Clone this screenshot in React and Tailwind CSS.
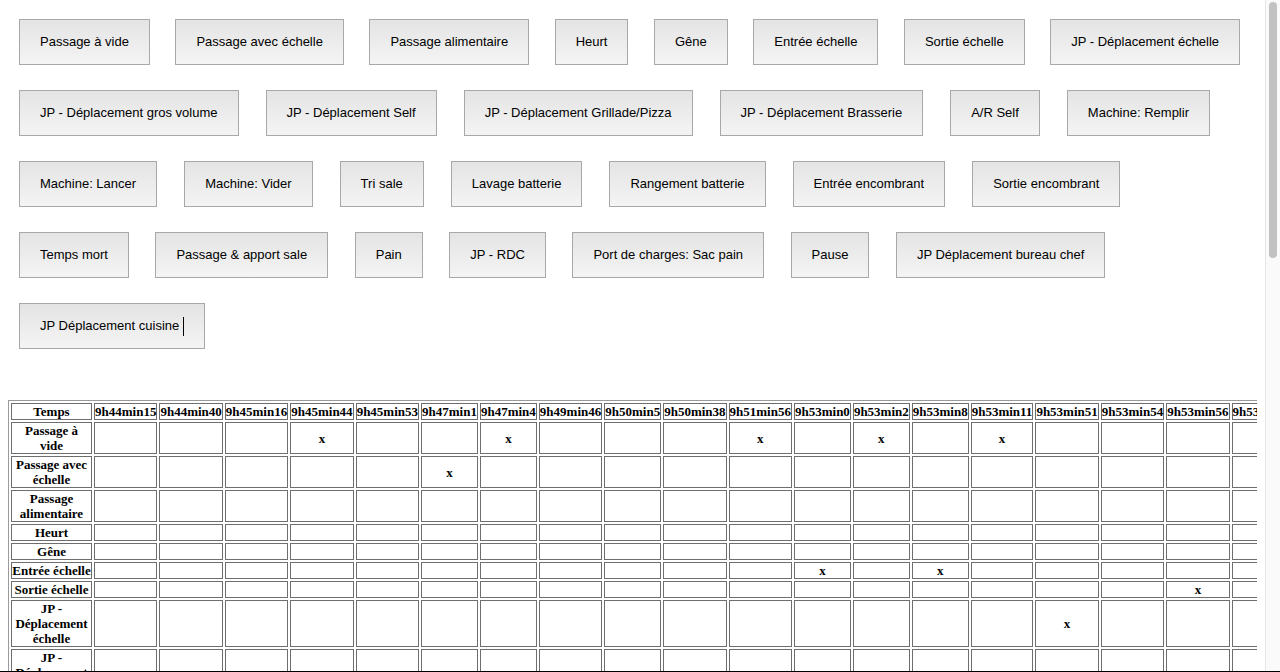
import React from "react";

const buttonRows = [
  {
    gap: "gap-[25.5px]",
    items: [
      "Passage à vide",
      "Passage avec échelle",
      "Passage alimentaire",
      "Heurt",
      "Gêne",
      "Entrée échelle",
      "Sortie échelle",
      "JP - Déplacement échelle",
    ],
  },
  {
    gap: "gap-[27px]",
    items: [
      "JP - Déplacement gros volume",
      "JP - Déplacement Self",
      "JP - Déplacement Grillade/Pizza",
      "JP - Déplacement Brasserie",
      "A/R Self",
      "Machine: Remplir",
    ],
  },
  {
    gap: "gap-[27px]",
    items: [
      "Machine: Lancer",
      "Machine: Vider",
      "Tri sale",
      "Lavage batterie",
      "Rangement batterie",
      "Entrée encombrant",
      "Sortie encombrant",
    ],
  },
  {
    gap: "gap-[26.5px]",
    items: [
      "Temps mort",
      "Passage & apport sale",
      "Pain",
      "JP - RDC",
      "Port de charges: Sac pain",
      "Pause",
      "JP Déplacement bureau chef",
    ],
  },
];

const times = [
  "9h44min15",
  "9h44min40",
  "9h45min16",
  "9h45min44",
  "9h45min53",
  "9h47min1",
  "9h47min4",
  "9h49min46",
  "9h50min5",
  "9h50min38",
  "9h51min56",
  "9h53min0",
  "9h53min2",
  "9h53min8",
  "9h53min11",
  "9h53min51",
  "9h53min54",
  "9h53min56",
  "9h53min59",
  "9h54min12",
  "9h54min30",
];

const actions = [
  "Passage à vide",
  "Passage avec échelle",
  "Passage alimentaire",
  "Heurt",
  "Gêne",
  "Entrée échelle",
  "Sortie échelle",
  "JP - Déplacement échelle",
  "JP - Déplacement gros volume",
  "JP - Déplacement Self",
];

// row index -> columns with a mark
const marks = {
  0: [3, 6, 10, 12, 14],
  1: [5],
  5: [11, 13],
  6: [17],
  7: [15],
};

function ActionButton({ label, children }) {
  return (
    <button className="shrink-0 h-[46px] px-5 border border-[#a8a8a8] bg-linear-to-b from-[#e4e4e4] to-[#f4f4f4] text-[13px] leading-4 text-black whitespace-nowrap">
      {label}
      {children}
    </button>
  );
}

export default function App() {
  return (
    <div className="relative flex h-screen w-full overflow-hidden bg-white font-['Liberation_Sans',Arial,sans-serif]">
      <div className="w-[1265px] shrink-0 overflow-hidden">
        {/* BUTTONS */}
        <div className="flex flex-col gap-[25px] pt-[19px] pl-[19px]">
          {buttonRows.map((row, i) => (
            <div key={i} className={`flex ${row.gap}`}>
              {row.items.map((label) => (
                <ActionButton key={label} label={label} />
              ))}
            </div>
          ))}
          <div className="flex">
            <ActionButton label="JP Déplacement cuisine">
              <span className="inline-block w-px h-[19px] bg-black ml-[4px] align-middle" />
            </ActionButton>
          </div>
        </div>

        {/* TABLE */}
        <div className="mx-2 mt-[51px] w-[1249px] overflow-hidden">
          <table className="border border-[#9a9a9a] border-separate border-spacing-[2px] font-['Liberation_Serif','Times_New_Roman',serif] text-[13px] leading-[15px] text-black">
            <thead>
              <tr>
                <th className="border border-[#6e6e6e] p-0 w-[81px] min-w-[81px] font-bold">Temps</th>
                {times.map((t) => (
                  <th key={t} className="border border-[#6e6e6e] p-0 font-bold whitespace-nowrap">
                    {t}
                  </th>
                ))}
              </tr>
            </thead>
            <tbody>
              {actions.map((a, r) => (
                <tr key={a}>
                  <th className="border border-[#6e6e6e] p-0 w-[81px] font-bold text-center">{a}</th>
                  {times.map((t, c) => (
                    <td key={t} className="border border-[#6e6e6e] p-0 text-center font-bold">
                      {marks[r] && marks[r].includes(c) ? "x" : ""}
                    </td>
                  ))}
                </tr>
              ))}
            </tbody>
          </table>
        </div>
      </div>

      {/* page scrollbar */}
      <div className="w-[15px] shrink-0 border-l border-[#e6e6e6] bg-[#fafafa] pt-[2px] pl-[3px]">
        <div className="w-[8px] h-[256px] rounded-full bg-[#c2c2c2]" />
      </div>

      <div className="absolute bottom-0 left-0 right-0 h-px bg-black" />
    </div>
  );
}
